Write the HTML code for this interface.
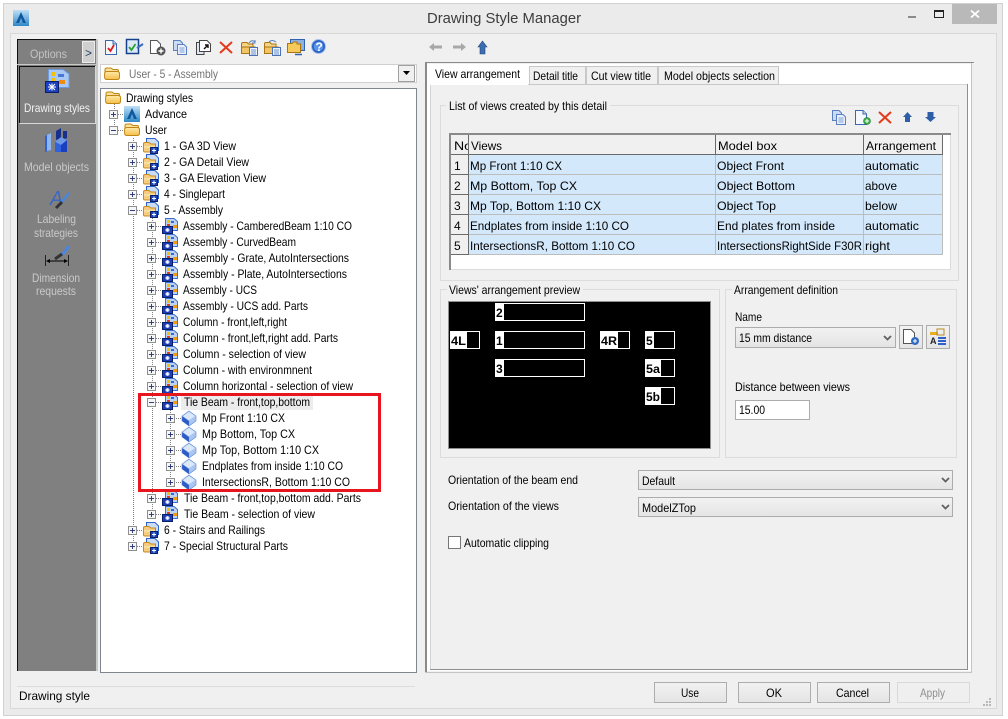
<!DOCTYPE html>
<html><head><meta charset="utf-8"><title>Drawing Style Manager</title>
<style>
html,body{margin:0;padding:0;background:#fff;width:1008px;height:719px;overflow:hidden}
svg{display:block}
text{font-family:"Liberation Sans",sans-serif;font-size:12px;fill:#000}
.c{shape-rendering:crispEdges}
.dot{stroke:#808080;stroke-width:1;stroke-dasharray:1 1;fill:none;shape-rendering:crispEdges}
</style></head><body>
<svg width="1008" height="719" viewBox="0 0 1008 719" xmlns="http://www.w3.org/2000/svg">
<defs>
<linearGradient id="g" x1="0" y1="0" x2="0" y2="1"><stop offset="0" stop-color="#f2f2f2"/><stop offset="1" stop-color="#e4e4e4"/></linearGradient>
<linearGradient id="fy" x1="0" y1="0" x2="0" y2="1"><stop offset="0" stop-color="#ffeaa8"/><stop offset="1" stop-color="#f5bf4c"/></linearGradient>
<linearGradient id="ab" x1="0" y1="0" x2="0" y2="1"><stop offset="0" stop-color="#bfe0f6"/><stop offset="1" stop-color="#2f88c8"/></linearGradient>
<g id="folder">
<path d="M1 6V3.500Q1 2 3 2H7L9 3.500H13Q14.500 3.500 14.500 5V7Z" fill="#fbdf9a" stroke="#c08614"/>
<path d="M.6 11V7.500Q.6 5.500 3 5.500H13Q15.500 5.500 15.500 7.500V11Q15.500 13.500 13 13.500H3Q.6 13.500 .6 11Z" fill="url(#fy)" stroke="#c08614"/>
</g>
<g id="plus"><rect class="c" x=".5" y=".5" width="8" height="8" fill="#f6f6f6" stroke="#8f8f8f"/><path class="c" d="M2 4.500H7M4.500 2V7" stroke="#2f3f7f" fill="none"/></g>
<g id="minus"><rect class="c" x=".5" y=".5" width="8" height="8" fill="#f6f6f6" stroke="#8f8f8f"/><path class="c" d="M2 4.500H7" stroke="#2f3f7f" fill="none"/></g>
<g id="fs">
<path d="M3.500 .5H12L15.500 4V12.500H3.500Z" fill="#c9dcf8" stroke="#2f62c8"/>
<path d="M.5 6Q.5 4.500 2 4.500H6L8 6H12.500V14H2Q.5 14 .5 13Z" fill="#f6cc7d" stroke="#c58a22"/>
<path d="M1 9H12" stroke="#fdeec8"/>
<rect class="c" x="7.500" y="9.500" width="7" height="6" fill="#1a46b8" stroke="#0a1f66"/>
<path class="c" d="M9 12.500H13M11 10.500V14.500" stroke="#fff"/>
</g>
<g id="ds">
<path d="M3.500 .5H12L15.500 3.500V12.500H3.500Z" fill="#b9d2f6" stroke="#3d70cc"/>
<rect class="c" x="5" y="2" width="3" height="3" fill="#f2c20a"/><rect class="c" x="5" y="6" width="3" height="2" fill="#e83a12"/><rect class="c" x="11" y="7" width="4" height="3" fill="#f29a12"/><rect class="c" x="9" y="3" width="3" height="2" fill="#3a68d0"/>
<rect class="c" x=".5" y="8.500" width="10" height="7" fill="#1a3fb8" stroke="#0a1f66"/>
<path d="M3 12H8M5.500 10V14M4 10.500L7 13.500M7 10.500L4 13.500" stroke="#fff" stroke-width=".8"/>
</g>
<g id="cube">
<path d="M7 0L14 5V10L7 15L0 10V5Z" fill="#b7d0f2"/>
<path d="M7 1L13 5L7 9L1 5Z" fill="#dbe8fa"/>
<path d="M0 5L7 10V15L0 10Z" fill="#2d5cc4"/>
<path d="M14 5L7 10V15L14 10Z" fill="#a9c6ee"/>
<path d="M7 0L14 5V10L7 15L0 10V5Z" fill="none" stroke="#5a86d4" stroke-width=".6"/>
</g>
<g id="alogo">
<rect class="c" width="16" height="16" fill="url(#ab)"/>
<path d="M8 2L13 13H10L8 8L6 13H3Z" fill="#10589e"/>
</g>
<path id="x" d="M1 1L13 12M13 1L1 12" stroke="#e23a1a" stroke-width="2" fill="none"/>
<g id="doc"><path d="M.5 .5H8L11.500 4V14.500H.5Z" fill="#f5f8fd" stroke="#3d66b0"/><path d="M8 .5V4H11.500" fill="#c8d8f0" stroke="#3d66b0"/></g>
<g id="copy"><path d="M.5 .5H7L9.500 3V10.500H.5Z" fill="#c9daf4" stroke="#5a7fc0"/><path d="M4.500 4.500H11L13.500 7V14.500H4.500Z" fill="#e9f0fb" stroke="#5a7fc0"/><path d="M6.500 8H11.500M6.500 10H11.500M6.500 12H11.500" stroke="#7fa0d8"/></g>
<g id="fdoc"><path d="M.5 4Q.5 2.500 2 2.500H6L7.500 4H12V13.500H.5Z" fill="#f5d488" stroke="#a9760f"/><path d="M.5 7H14L12 13.500H.5Z" fill="#f2c465" stroke="#a9760f"/><rect class="c" x="8.500" y="7.500" width="8" height="8" fill="#eef3fb" stroke="#4a72b8"/><path class="c" d="M10 10H15M10 12H15M10 14H15" stroke="#6f90cc"/></g>
<g id="sel"><rect class="c" x=".5" y=".5" width="314" height="19" fill="url(#g)" stroke="#acacac"/><path d="M304 8L307.500 11.500L311 8" fill="none" stroke="#606060" stroke-width="1.800"/></g>
</defs>

<!-- window -->
<rect class="c" x="3.500" y="3.500" width="999" height="712" fill="#ebebeb" stroke="#d2d2d2"/>
<rect class="c" x="10.500" y="33.500" width="986" height="675" fill="#f0f0f0" stroke="#d8d8d8"/>
<use href="#alogo" x="13" y="10"/>
<text x="427" y="23" style="font-size:15px;fill:#3c3c3c" textLength="154" lengthAdjust="spacingAndGlyphs">Drawing Style Manager</text>
<rect class="c" x="908" y="16" width="8" height="2" fill="#8a8a8a"/>
<rect class="c" x="934.500" y="10.500" width="9" height="7" fill="none" stroke="#222"/><rect class="c" x="934" y="10" width="10" height="2" fill="#222"/>
<rect class="c" x="952" y="4" width="45" height="20" fill="#b9b9b9"/>
<path d="M971 10.500L979 17.500M979 10.500L971 17.500" stroke="#fff" stroke-width="1.800"/>

<!-- sidebar -->
<rect class="c" x="17" y="39" width="80" height="632" fill="#808080"/>
<rect class="c" x="17" y="39" width="1" height="632" fill="#101010"/>
<rect class="c" x="17" y="39" width="79" height="1" fill="#101010"/>
<rect class="c" x="96" y="39" width="2" height="632" fill="#c8c8c8"/>
<rect class="c" x="82.500" y="41.500" width="12" height="21" fill="#cfcfcf" stroke="#ececec"/>
<text x="85" y="57" style="fill:#26406a" textLength="7" lengthAdjust="spacingAndGlyphs">&gt;</text>
<text x="30" y="58" style="fill:#c4c4c4" textLength="37" lengthAdjust="spacingAndGlyphs">Options</text>
<rect class="c" x="17" y="64" width="79" height="1" fill="#c8c8c8"/>
<path class="c" d="M19.500 123V66.500H95" stroke="#111" fill="none"/>
<path class="c" d="M19.500 123.500H95.500V66" stroke="#d8d8d8" fill="none"/>
<g transform="translate(45,69)">
<path d="M3.500 .5H18L24 5V18.500H3.500Z" fill="#a9c8f3" stroke="#6c9ae0"/>
<rect class="c" x="6" y="3" width="4" height="4" fill="#f2c20a"/><rect class="c" x="6" y="9" width="4" height="3" fill="#f2c20a"/><rect class="c" x="13" y="5" width="6" height="3" fill="#4a78d8"/><rect class="c" x="14" y="11" width="6" height="4" fill="#ef8a12"/>
<rect class="c" x=".5" y="12.500" width="13" height="11" fill="#1a3fc0" stroke="#0a1f66"/>
<path d="M3 18H11M7 14.500V21.500M4 15L10 21M10 15L4 21" stroke="#fff"/>
</g>
<text x="24" y="112" style="fill:#f2f2f2" textLength="66" lengthAdjust="spacingAndGlyphs">Drawing styles</text>
<g transform="translate(45,128)">
<path d="M0 8L6 5V22L0 24Z" fill="#2f62d8"/><path d="M2 7L6 5V22L2 23Z" fill="#8fb6f2"/>
<path d="M11 3L16 0V10L11 12Z" fill="#16308c"/><path d="M18 3H22V10L18 12Z" fill="#16308c"/>
<path d="M10 14L16 9L22 12V24H10Z" fill="#1a3fc0"/><path d="M10 14L16 9L22 12L16 17Z" fill="#6d98e8"/><path d="M10 14L16 17V24H10Z" fill="#2f62dc"/>
</g>
<text x="24" y="171" style="fill:#c9c9c9" textLength="65" lengthAdjust="spacingAndGlyphs">Model objects</text>
<text x="50" y="205" style="font-size:20px;font-style:italic;fill:#3d68c0" textLength="13" lengthAdjust="spacingAndGlyphs">A</text>
<path d="M61 203L69 193" stroke="#4a86e0" stroke-width="2.500"/><path d="M56 208L62 202" stroke="#333" stroke-width="3"/>
<text x="37" y="223" style="fill:#c9c9c9" textLength="39" lengthAdjust="spacingAndGlyphs">Labeling</text>
<text x="34" y="237" style="fill:#c9c9c9" textLength="44" lengthAdjust="spacingAndGlyphs">strategies</text>
<path d="M45.500 255V266M68.500 255V266" stroke="#222"/><path d="M47 261H67" stroke="#000"/><path d="M46 261L50 259V263ZM68 261L64 259V263Z" fill="#000"/>
<path d="M62 255L69 246" stroke="#4a86e0" stroke-width="3"/><path d="M55 259L62 254" stroke="#333" stroke-width="3"/>
<text x="32" y="282" style="fill:#c9c9c9" textLength="48" lengthAdjust="spacingAndGlyphs">Dimension</text>
<text x="36" y="295" style="fill:#c9c9c9" textLength="40" lengthAdjust="spacingAndGlyphs">requests</text>

<!-- toolbar -->
<g transform="translate(105,40)"><use href="#doc"/><path d="M3 8L5.500 11L9 5" stroke="#e01a1a" stroke-width="1.800" fill="none"/></g>
<g transform="translate(126,39)"><rect x=".5" y=".5" width="12" height="14" fill="#dbe8f8" stroke="#16408c" stroke-width="1.500"/><path d="M3 8L5.500 11L9.500 5" stroke="#2aa32a" stroke-width="1.800" fill="none"/><path d="M11 9L17 5" stroke="#3a6cc0" stroke-width="2"/></g>
<g transform="translate(150,40)"><path d="M.5 .5H7L10.500 4V13.500H.5Z" fill="#fff" stroke="#555"/><circle cx="11" cy="11" r="4.500" fill="#555"/><path d="M8.500 11H13.500M11 8.500V13.500" stroke="#fff" stroke-width="1.400"/></g>
<use href="#copy" x="173" y="40"/>
<g transform="translate(196,40)"><path d="M.5 2.500H8V14.500H.5Z" fill="#dfe7f4" stroke="#444"/><path d="M3.500 .5H11L14.500 4V11.500H3.500Z" fill="#fff" stroke="#444"/><path d="M8 9L12 5M9 5H12V8" stroke="#111" stroke-width="1.400" fill="none"/></g>
<use href="#x" x="219" y="41"/>
<g transform="translate(241,40)"><use href="#fdoc"/><path d="M8 3Q11 -1 14 2M14 0V3H11" stroke="#5a7fc0" fill="none"/></g>
<g transform="translate(264,40)"><use href="#fdoc"/><path d="M5 2Q8 -1 12 2" stroke="#5a7fc0" fill="none"/></g>
<g transform="translate(287,39)"><rect x="3.500" y=".5" width="14" height="11" fill="#8db0e0" stroke="#2f62b0"/><path d="M.5 4.500H5L6.500 3H10V5H13.500V13.500H.5Z" fill="#f5ca5a" stroke="#a9760f"/><path d="M8 15.500H15" stroke="#2f62b0" stroke-width="1.500"/></g>
<g transform="translate(311,39)"><circle cx="7.500" cy="7.500" r="7" fill="#2a62c8" stroke="#a8c0e8"/><circle cx="7.500" cy="7.500" r="4.800" fill="#5a94e8"/><text x="4.500" y="12" style="font-size:12px;font-weight:bold;fill:#fff">?</text></g>

<!-- combo -->
<rect class="c" x="100.500" y="64.500" width="316" height="18" fill="#fff" stroke="#d0d0d0"/>
<use href="#folder" x="104" y="66"/>
<text x="129" y="78" style="fill:#737373" textLength="89" lengthAdjust="spacingAndGlyphs">User - 5 - Assembly</text>
<rect class="c" x="398.500" y="65.500" width="16" height="16" fill="#f0f0f0" stroke="#a0a0a0"/>
<path d="M403 71H410L406.500 75Z" fill="#000"/>

<!-- tree pane -->
<rect class="c" x="100.500" y="88.500" width="316" height="584" fill="#fff" stroke="#7f8690"/>
<rect class="c" x="181" y="396" width="132" height="14" fill="#ececec"/>

<path class="dot" d="M114.500 104V130M133.500 138V546M152.500 218V514M170.500 410V482"/>
<path class="dot" d="M118 114.500H124M118 130.500H124M137 146.500H143M137 162.500H143M137 178.500H143M137 194.500H143M137 210.500H143M137 530.500H143M137 546.500H143"/>
<path class="dot" d="M156 226.500H162M156 242.500H162M156 258.500H162M156 274.500H162M156 290.500H162M156 306.500H162M156 322.500H162M156 338.500H162M156 354.500H162M156 370.500H162M156 386.500H162M156 402.500H162M156 498.500H162M156 514.500H162"/>
<path class="dot" d="M174 418.500H182M174 434.500H182M174 450.500H182M174 466.500H182M174 482.500H182"/>

<use href="#folder" x="105" y="90"/>
<use href="#plus" x="109" y="110"/><use href="#alogo" x="124" y="106"/>
<use href="#minus" x="109" y="126"/><use href="#folder" x="124" y="122"/>
<use href="#plus" x="128" y="142"/><use href="#fs" x="143" y="138"/>
<use href="#plus" x="128" y="158"/><use href="#fs" x="143" y="154"/>
<use href="#plus" x="128" y="174"/><use href="#fs" x="143" y="170"/>
<use href="#plus" x="128" y="190"/><use href="#fs" x="143" y="186"/>
<use href="#minus" x="128" y="206"/><use href="#fs" x="143" y="202"/>
<use href="#plus" x="147" y="222"/><use href="#ds" x="162" y="218"/>
<use href="#plus" x="147" y="238"/><use href="#ds" x="162" y="234"/>
<use href="#plus" x="147" y="254"/><use href="#ds" x="162" y="250"/>
<use href="#plus" x="147" y="270"/><use href="#ds" x="162" y="266"/>
<use href="#plus" x="147" y="286"/><use href="#ds" x="162" y="282"/>
<use href="#plus" x="147" y="302"/><use href="#ds" x="162" y="298"/>
<use href="#plus" x="147" y="318"/><use href="#ds" x="162" y="314"/>
<use href="#plus" x="147" y="334"/><use href="#ds" x="162" y="330"/>
<use href="#plus" x="147" y="350"/><use href="#ds" x="162" y="346"/>
<use href="#plus" x="147" y="366"/><use href="#ds" x="162" y="362"/>
<use href="#plus" x="147" y="382"/><use href="#ds" x="162" y="378"/>
<use href="#minus" x="147" y="398"/><use href="#ds" x="162" y="394"/>
<use href="#plus" x="166" y="414"/><use href="#cube" x="182" y="411"/>
<use href="#plus" x="166" y="430"/><use href="#cube" x="182" y="427"/>
<use href="#plus" x="166" y="446"/><use href="#cube" x="182" y="443"/>
<use href="#plus" x="166" y="462"/><use href="#cube" x="182" y="459"/>
<use href="#plus" x="166" y="478"/><use href="#cube" x="182" y="475"/>
<use href="#plus" x="147" y="494"/><use href="#ds" x="162" y="490"/>
<use href="#plus" x="147" y="510"/><use href="#ds" x="162" y="506"/>
<use href="#plus" x="128" y="526"/><use href="#fs" x="143" y="522"/>
<use href="#plus" x="128" y="542"/><use href="#fs" x="143" y="538"/>

<text x="126" y="102" textLength="67" lengthAdjust="spacingAndGlyphs">Drawing styles</text>
<text x="145" y="118" textLength="42" lengthAdjust="spacingAndGlyphs">Advance</text>
<text x="145" y="134" textLength="22" lengthAdjust="spacingAndGlyphs">User</text>
<text x="164" y="150" textLength="72" lengthAdjust="spacingAndGlyphs">1 - GA 3D View</text>
<text x="164" y="166" textLength="85" lengthAdjust="spacingAndGlyphs">2 - GA Detail View</text>
<text x="164" y="182" textLength="102" lengthAdjust="spacingAndGlyphs">3 - GA Elevation View</text>
<text x="164" y="198" textLength="61" lengthAdjust="spacingAndGlyphs">4 - Singlepart</text>
<text x="164" y="214" textLength="59" lengthAdjust="spacingAndGlyphs">5 - Assembly</text>
<text x="183" y="230" textLength="169" lengthAdjust="spacingAndGlyphs">Assembly - CamberedBeam 1:10 CO</text>
<text x="183" y="246" textLength="113" lengthAdjust="spacingAndGlyphs">Assembly - CurvedBeam</text>
<text x="183" y="262" textLength="166" lengthAdjust="spacingAndGlyphs">Assembly - Grate, AutoIntersections</text>
<text x="183" y="278" textLength="164" lengthAdjust="spacingAndGlyphs">Assembly - Plate, AutoIntersections</text>
<text x="183" y="294" textLength="74" lengthAdjust="spacingAndGlyphs">Assembly - UCS</text>
<text x="183" y="310" textLength="125" lengthAdjust="spacingAndGlyphs">Assembly - UCS add. Parts</text>
<text x="183" y="326" textLength="104" lengthAdjust="spacingAndGlyphs">Column - front,left,right</text>
<text x="183" y="342" textLength="155" lengthAdjust="spacingAndGlyphs">Column - front,left,right add. Parts</text>
<text x="183" y="358" textLength="123" lengthAdjust="spacingAndGlyphs">Column - selection of view</text>
<text x="183" y="374" textLength="129" lengthAdjust="spacingAndGlyphs">Column - with environmnent</text>
<text x="183" y="390" textLength="170" lengthAdjust="spacingAndGlyphs">Column horizontal - selection of view</text>
<text x="184" y="406" textLength="126" lengthAdjust="spacingAndGlyphs">Tie Beam - front,top,bottom</text>
<text x="202" y="422" textLength="83" lengthAdjust="spacingAndGlyphs">Mp Front 1:10 CX</text>
<text x="202" y="438" textLength="93" lengthAdjust="spacingAndGlyphs">Mp Bottom, Top CX</text>
<text x="202" y="454" textLength="117" lengthAdjust="spacingAndGlyphs">Mp Top, Bottom 1:10 CX</text>
<text x="202" y="470" textLength="141" lengthAdjust="spacingAndGlyphs">Endplates from inside 1:10 CO</text>
<text x="202" y="486" textLength="148" lengthAdjust="spacingAndGlyphs">IntersectionsR, Bottom 1:10 CO</text>
<text x="184" y="502" textLength="177" lengthAdjust="spacingAndGlyphs">Tie Beam - front,top,bottom add. Parts</text>
<text x="184" y="518" textLength="131" lengthAdjust="spacingAndGlyphs">Tie Beam - selection of view</text>
<text x="164" y="534" textLength="101" lengthAdjust="spacingAndGlyphs">6 - Stairs and Railings</text>
<text x="164" y="550" textLength="124" lengthAdjust="spacingAndGlyphs">7 - Special Structural Parts</text>

<rect class="c" x="139.500" y="394.500" width="240" height="96" fill="none" stroke="#e8141e" stroke-width="3"/>

<!-- nav arrows -->
<path d="M429 47L434 43V45.500H442V48.500H434V51Z" fill="#a8a8a8"/>
<path d="M466 47L461 43V45.500H453V48.500H461V51Z" fill="#a8a8a8"/>
<path d="M482.500 41L487 47H485V54H480V47H478Z" fill="#3d6cb0" stroke="#24487e" stroke-width=".6"/>

<!-- tab frame -->
<rect class="c" x="427" y="64" width="545" height="607" fill="#fff"/>
<rect class="c" x="425" y="62" width="2" height="610" fill="#8a8a8a"/>
<rect class="c" x="425" y="62" width="549" height="1" fill="#8a8a8a"/>
<rect class="c" x="971" y="63" width="1" height="610" fill="#c4c4c4"/>
<rect class="c" x="425" y="672" width="547" height="1" fill="#c4c4c4"/>
<rect class="c" x="430" y="84" width="537" height="585" fill="#f0f0f0"/>
<path class="c" d="M430.500 669V84.500H967" stroke="#d4d4d4" fill="none"/>
<path class="c" d="M430 669.500H967.500V84" stroke="#8f8f8f" fill="none"/>
<rect class="c" x="428" y="65" width="100" height="20" fill="#fff"/>
<rect class="c" x="529.500" y="66.500" width="56" height="18" fill="#f0f0f0" stroke="#c8c8c8"/>
<rect class="c" x="586.500" y="66.500" width="71" height="18" fill="#f0f0f0" stroke="#c8c8c8"/>
<rect class="c" x="658.500" y="66.500" width="120" height="18" fill="#f0f0f0" stroke="#c8c8c8"/>
<text x="435" y="78" textLength="85" lengthAdjust="spacingAndGlyphs">View arrangement</text>
<text x="533" y="80" textLength="45" lengthAdjust="spacingAndGlyphs">Detail title</text>
<text x="591" y="80" textLength="60" lengthAdjust="spacingAndGlyphs">Cut view title</text>
<text x="664" y="80" textLength="111" lengthAdjust="spacingAndGlyphs">Model objects selection</text>

<!-- List of views -->
<rect class="c" x="440.500" y="105.500" width="518" height="175" fill="none" stroke="#dcdcdc"/>
<rect class="c" x="446" y="100" width="164" height="12" fill="#f0f0f0"/>
<text x="449" y="110" textLength="158" lengthAdjust="spacingAndGlyphs">List of views created by this detail</text>
<use href="#copy" x="832" y="110"/>
<g transform="translate(855,110)"><use href="#doc"/><circle cx="12" cy="11" r="3.500" fill="#3cae4a" stroke="#1d7a2a" stroke-width=".6"/><path d="M10 11H14M12 9V13" stroke="#fff"/></g>
<use href="#x" x="878" y="111"/>
<path d="M907.500 112L912 117H910V122H905V117H903Z" fill="#2f5ea8"/>
<path d="M930.500 122L936 117H933.500V112H927.500V117H925Z" fill="#2f5ea8"/>

<!-- table -->
<rect class="c" x="449.500" y="133.500" width="501" height="136" fill="#fff" stroke="#dcdcdc"/>
<rect class="c" x="449" y="133" width="502" height="2" fill="#8a8a8a"/>
<rect class="c" x="449" y="133" width="2" height="137" fill="#8a8a8a"/>
<rect class="c" x="451" y="135" width="491" height="20" fill="#f0f0f0"/>
<rect class="c" x="451" y="154" width="491" height="1" fill="#6a6a6a"/>
<rect class="c" x="451" y="155" width="17" height="100" fill="#f0f0f0"/>
<rect class="c" x="468" y="155" width="474" height="100" fill="#d4e8fb"/>
<path class="c" d="M451 174.500H942M451 194.500H942M451 214.500H942M451 234.500H942M451 254.500H942" stroke="#bdbdbd"/>
<path class="c" d="M451 174.500H468M451 194.500H468M451 214.500H468M451 234.500H468M451 254.500H468" stroke="#6a6a6a"/>
<path class="c" d="M468.500 135V255" stroke="#6a6a6a"/>
<path class="c" d="M715.500 155V255M863.500 155V255M942.500 155V255" stroke="#bdbdbd"/>
<path class="c" d="M715.500 135V155M863.500 135V155M942.500 135V155" stroke="#6a6a6a"/>
<svg x="451" y="135" width="17" height="20"><text x="3" y="15" textLength="18" lengthAdjust="spacingAndGlyphs">No</text></svg>
<text x="471" y="150" textLength="31" lengthAdjust="spacingAndGlyphs">Views</text>
<text x="718" y="150" textLength="59" lengthAdjust="spacingAndGlyphs">Model box</text>
<text x="866" y="150" textLength="70" lengthAdjust="spacingAndGlyphs">Arrangement</text>
<text x="454" y="170">1</text><text x="454" y="190">2</text><text x="454" y="210">3</text><text x="454" y="230">4</text><text x="454" y="250">5</text>
<text x="470" y="170" textLength="92" lengthAdjust="spacingAndGlyphs">Mp Front 1:10 CX</text>
<text x="470" y="190" textLength="107" lengthAdjust="spacingAndGlyphs">Mp Bottom, Top CX</text>
<text x="470" y="210" textLength="131" lengthAdjust="spacingAndGlyphs">Mp Top, Bottom 1:10 CX</text>
<text x="470" y="230" textLength="159" lengthAdjust="spacingAndGlyphs">Endplates from inside 1:10 CO</text>
<text x="470" y="250" textLength="165" lengthAdjust="spacingAndGlyphs">IntersectionsR, Bottom 1:10 CO</text>
<text x="717" y="170" textLength="67" lengthAdjust="spacingAndGlyphs">Object Front</text>
<text x="717" y="190" textLength="78" lengthAdjust="spacingAndGlyphs">Object Bottom</text>
<text x="717" y="210" textLength="59" lengthAdjust="spacingAndGlyphs">Object Top</text>
<text x="717" y="230" textLength="118" lengthAdjust="spacingAndGlyphs">End plates from inside</text>
<text x="717" y="250" textLength="145" lengthAdjust="spacingAndGlyphs">IntersectionsRightSide F30R</text>
<text x="865" y="170" textLength="54" lengthAdjust="spacingAndGlyphs">automatic</text>
<text x="865" y="190" textLength="32" lengthAdjust="spacingAndGlyphs">above</text>
<text x="865" y="210" textLength="32" lengthAdjust="spacingAndGlyphs">below</text>
<text x="865" y="230" textLength="54" lengthAdjust="spacingAndGlyphs">automatic</text>
<text x="865" y="250" textLength="25" lengthAdjust="spacingAndGlyphs">right</text>

<!-- preview -->
<rect class="c" x="440.500" y="289.500" width="279" height="168" fill="none" stroke="#dcdcdc"/>
<rect class="c" x="447" y="284" width="136" height="12" fill="#f0f0f0"/>
<text x="449" y="294" textLength="131" lengthAdjust="spacingAndGlyphs">Views' arrangement preview</text>
<rect class="c" x="448.500" y="301.500" width="262" height="147" fill="#000" stroke="#8f8f8f"/>
<g fill="#000" stroke="#fff">
<rect class="c" x="495.500" y="303.500" width="89" height="17"/><rect class="c" x="495.500" y="331.500" width="89" height="17"/><rect class="c" x="495.500" y="359.500" width="89" height="17"/>
<rect class="c" x="450.500" y="331.500" width="29" height="17"/><rect class="c" x="600.500" y="331.500" width="29" height="17"/>
<rect class="c" x="645.500" y="331.500" width="29" height="17"/><rect class="c" x="645.500" y="359.500" width="29" height="17"/><rect class="c" x="645.500" y="387.500" width="29" height="17"/>
</g>
<g fill="#fff" class="c">
<rect x="495" y="303" width="9" height="18"/><rect x="495" y="331" width="9" height="18"/><rect x="495" y="359" width="9" height="18"/>
<rect x="450" y="331" width="17" height="18"/><rect x="600" y="331" width="18" height="18"/>
<rect x="645" y="331" width="9" height="18"/><rect x="645" y="359" width="16" height="18"/><rect x="645" y="387" width="16" height="18"/>
</g>
<text x="496" y="317" style="font-weight:bold">2</text><text x="496" y="345" style="font-weight:bold">1</text><text x="496" y="373" style="font-weight:bold">3</text>
<text x="451" y="345" style="font-weight:bold" textLength="15" lengthAdjust="spacingAndGlyphs">4L</text>
<text x="601" y="345" style="font-weight:bold" textLength="16" lengthAdjust="spacingAndGlyphs">4R</text>
<text x="646" y="345" style="font-weight:bold">5</text>
<text x="646" y="373" style="font-weight:bold" textLength="14" lengthAdjust="spacingAndGlyphs">5a</text>
<text x="646" y="401" style="font-weight:bold" textLength="14" lengthAdjust="spacingAndGlyphs">5b</text>

<!-- arrangement definition -->
<rect class="c" x="725.500" y="289.500" width="231" height="168" fill="none" stroke="#dcdcdc"/>
<rect class="c" x="732" y="284" width="108" height="12" fill="#f0f0f0"/>
<text x="734" y="294" textLength="104" lengthAdjust="spacingAndGlyphs">Arrangement definition</text>
<text x="735" y="321" textLength="27" lengthAdjust="spacingAndGlyphs">Name</text>
<rect class="c" x="735.500" y="327.500" width="160" height="20" fill="url(#g)" stroke="#acacac"/>
<text x="739" y="342" textLength="73" lengthAdjust="spacingAndGlyphs">15 mm distance</text>
<path d="M884 336L887.500 339.500L891 336" fill="none" stroke="#606060" stroke-width="1.800"/>
<rect class="c" x="899.500" y="325.500" width="23" height="23" fill="url(#g)" stroke="#acacac"/>
<g transform="translate(903,329)"><path d="M.5 .5H8L11.500 4V14.500H.5Z" fill="#fff" stroke="#555"/><circle cx="12" cy="12" r="4" fill="#2f6cc0"/><path d="M10 12H14M12 10V14" stroke="#fff"/></g>
<rect class="c" x="926.500" y="325.500" width="23" height="23" fill="url(#g)" stroke="#acacac"/>
<g transform="translate(929,328)"><rect class="c" x="1" y="4" width="8" height="3" fill="#e8b020"/><rect class="c" x="8" y="1" width="7" height="6" fill="none" stroke="#b88a20"/><text x="1" y="16" style="font-size:9px;font-weight:bold;fill:#222">A</text><rect class="c" x="9" y="9" width="8" height="2" fill="#2f62c8"/><rect class="c" x="9" y="12" width="8" height="2" fill="#2f62c8"/><rect class="c" x="9" y="15" width="8" height="2" fill="#2f62c8"/></g>
<text x="735" y="391" textLength="115" lengthAdjust="spacingAndGlyphs">Distance between views</text>
<rect class="c" x="735.500" y="400.500" width="74" height="19" fill="#fff" stroke="#acacac"/>
<text x="739" y="414" textLength="26" lengthAdjust="spacingAndGlyphs">15.00</text>

<!-- orientation -->
<text x="448" y="484" textLength="130" lengthAdjust="spacingAndGlyphs">Orientation of the beam end</text>
<text x="448" y="510" textLength="111" lengthAdjust="spacingAndGlyphs">Orientation of the views</text>
<use href="#sel" x="638" y="470"/><use href="#sel" x="638" y="497"/>
<text x="642" y="485" textLength="33" lengthAdjust="spacingAndGlyphs">Default</text>
<text x="642" y="512" textLength="54" lengthAdjust="spacingAndGlyphs">ModelZTop</text>
<rect class="c" x="448.500" y="536.500" width="12" height="12" fill="#fff" stroke="#777"/>
<text x="464" y="547" textLength="85" lengthAdjust="spacingAndGlyphs">Automatic clipping</text>

<!-- bottom -->
<rect class="c" x="17" y="686" width="398" height="1" fill="#dcdcdc"/>
<text x="19" y="700" textLength="71" lengthAdjust="spacingAndGlyphs">Drawing style</text>
<rect class="c" x="654.500" y="682.500" width="72" height="20" fill="url(#g)" stroke="#adadad"/>
<rect class="c" x="738.500" y="682.500" width="72" height="20" fill="url(#g)" stroke="#adadad"/>
<rect class="c" x="817.500" y="682.500" width="72" height="20" fill="url(#g)" stroke="#adadad"/>
<rect class="c" x="897.500" y="682.500" width="72" height="20" fill="#efefef" stroke="#d9d9d9"/>
<text x="681" y="697" textLength="18" lengthAdjust="spacingAndGlyphs">Use</text>
<text x="766" y="697" textLength="16" lengthAdjust="spacingAndGlyphs">OK</text>
<text x="836" y="697" textLength="33" lengthAdjust="spacingAndGlyphs">Cancel</text>
<text x="920" y="697" style="fill:#8e8e8e" textLength="25" lengthAdjust="spacingAndGlyphs">Apply</text>
<g class="c" fill="#b8b8b8"><rect x="989" y="698" width="2" height="2"/><rect x="986" y="701" width="2" height="2"/><rect x="989" y="701" width="2" height="2"/><rect x="983" y="704" width="2" height="2"/><rect x="986" y="704" width="2" height="2"/><rect x="989" y="704" width="2" height="2"/></g>
</svg>
</body></html>
